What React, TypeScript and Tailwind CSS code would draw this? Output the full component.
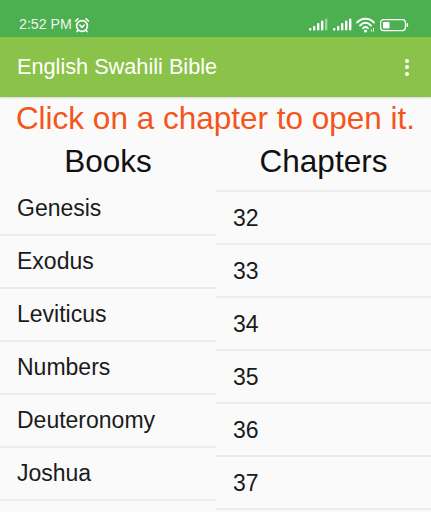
const books = ['Genesis', 'Exodus', 'Leviticus', 'Numbers', 'Deuteronomy', 'Joshua'];
const chapters = ['32', '33', '34', '35', '36', '37'];

function StatusIcons() {
  return (
    <svg width="100" height="16" viewBox="0 0 100 16" className="text-white" fill="currentColor">
      <g>
        <rect x="0" y="11" width="2.4" height="2.5" rx="1" />
        <rect x="4" y="9" width="2.4" height="4.5" rx="1" />
        <rect x="8" y="6" width="2.4" height="7.5" rx="1" />
        <rect x="12" y="3.5" width="2.4" height="10" rx="1" />
        <rect x="16" y="1.5" width="2.4" height="12" rx="1" opacity="0.45" />
      </g>
      <g transform="translate(24 0)">
        <rect x="0" y="11" width="2.4" height="2.5" rx="1" />
        <rect x="4" y="9" width="2.4" height="4.5" rx="1" />
        <rect x="8" y="6" width="2.4" height="7.5" rx="1" />
        <rect x="12" y="3.5" width="2.4" height="10" rx="1" />
        <rect x="16" y="1.5" width="2.4" height="12" rx="1" />
      </g>
      <g transform="translate(47 0)" fill="none" stroke="currentColor" strokeWidth="1.8" strokeLinecap="round">
        <path d="M1 5.5C6 0.5 13 0.5 18 5.5" />
        <path d="M4 8.5C7.5 5 11.5 5 15 8.5" />
        <path d="M7 11.2C8.7 9.6 10.3 9.6 12 11.2" />
      </g>
      <circle cx="56.5" cy="14" r="1.6" />
      <rect x="62" y="12.5" width="1" height="2" />
      <rect x="64" y="11" width="1" height="3.5" />
      <rect x="71.6" y="2.6" width="24.8" height="11" rx="3" fill="none" stroke="currentColor" strokeWidth="1.2" />
      <rect x="74" y="5" width="6.5" height="6.5" rx="1" />
      <rect x="97.5" y="6" width="1.6" height="4" rx="0.8" />
    </svg>
  );
}

export default function App() {
  return (
    <div className="h-[512px] w-[431px] overflow-hidden bg-[#fafafa] font-['Liberation_Sans',sans-serif]">
      <div className="flex h-[37px] items-center justify-between bg-[#4caf50] pl-[19px] pr-[22px] pt-[12px] text-white">
        <div className="flex items-center gap-[2px]">
          <span className="text-[14.2px] leading-none opacity-90">2:52 PM</span>
          <svg width="16" height="16" viewBox="0 0 16 16" fill="none" stroke="currentColor" strokeWidth="1.6" strokeLinecap="round">
            <circle cx="8" cy="9" r="5.4" />
            <path d="M1.5 4L4 1.8M14.5 4L12 1.8" />
            <path d="M3.8 13.5L3 14.6M12.2 13.5L13 14.6" />
            <path d="M5.8 8L8 10.3L10.2 8" />
          </svg>
        </div>
        <StatusIcons />
      </div>

      <div className="flex h-[60px] items-center justify-between bg-[#8bc34a] pl-[17px] pr-[22px] shadow-[0_1px_2px_rgba(0,0,0,0.15)]">
        <h1 className="text-[21.7px] leading-none text-white">English Swahili Bible</h1>
        <div className="flex flex-col gap-[2.5px]">
          <span className="h-[4px] w-[4px] rounded-full bg-white" />
          <span className="h-[4px] w-[4px] rounded-full bg-white" />
          <span className="h-[4px] w-[4px] rounded-full bg-white" />
        </div>
      </div>

      <p className="h-[42px] whitespace-nowrap pt-[3px] text-center text-[31.5px] leading-[36px] text-[#f4551a]">
        Click on a chapter to open it.
      </p>

      <div className="flex">
        <div className="w-[216px]">
          <div className="h-[44px] text-center text-[31.5px] leading-[44px] text-[#111]">Books</div>
          {books.map(b => (
            <div key={b} className="h-[53px] border-b-2 border-[#ececec] pl-[17px] pt-[12px] text-[23px] leading-[26px] text-[#1a1a1a]">
              {b}
            </div>
          ))}
        </div>
        <div className="flex-1">
          <div className="h-[53px] border-b-2 border-[#ececec] text-center text-[31.5px] leading-[44px] text-[#111]">Chapters</div>
          {chapters.map(c => (
            <div key={c} className="h-[53px] border-b-2 border-[#ececec] pl-[17px] pt-[13px] text-[23px] leading-[26px] text-[#1a1a1a]">
              {c}
            </div>
          ))}
        </div>
      </div>
    </div>
  );
}
